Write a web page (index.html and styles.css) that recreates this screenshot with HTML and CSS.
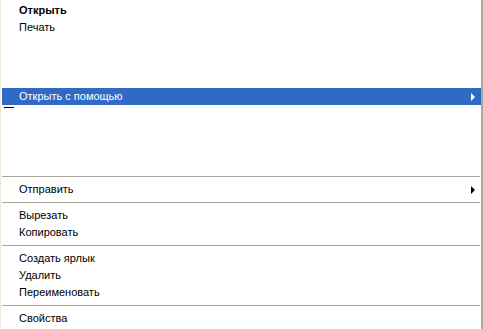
FILE: index.html
```html
<!DOCTYPE html>
<html>
<head>
<meta charset="utf-8">
<link rel="stylesheet" href="styles.css">
</head>
<body>
<div class="menu">
  <div class="item bold">Открыть</div>
  <div class="item">Печать</div>
  <div class="item"></div>
  <div class="item"></div>
  <div class="item"></div>
  <div class="item hl">Открыть с помощью<span class="arrow white"></span></div>
  <div class="sub"><div class="dash"></div></div>
  <div class="sep"></div>
  <div class="item">Отправить<span class="arrow"></span></div>
  <div class="sep"></div>
  <div class="item">Вырезать</div>
  <div class="item">Копировать</div>
  <div class="sep"></div>
  <div class="item">Создать ярлык</div>
  <div class="item">Удалить</div>
  <div class="item">Переименовать</div>
  <div class="sep"></div>
  <div class="item">Свойства</div>
</div>
</body>
</html>
```
FILE: styles.css
```css
html, body {
  margin: 0;
  padding: 0;
  background: #ffffff;
}
.menu {
  width: 483px;
  height: 329px;
  box-sizing: border-box;
  padding: 2px 0 0 0;
  border-left: 1px solid #ece9d8;
  border-right: 2px solid #aca899;
  background: #ffffff;
  font-family: "Liberation Sans", Arial, sans-serif;
  font-size: 11px;
  color: #000000;
  display: flex;
  flex-direction: column;
  overflow: hidden;
}
.item {
  position: relative;
  height: 17px;
  line-height: 17px;
  padding-left: 17px;
  margin-left: 1px;
  flex: none;
  white-space: nowrap;
}
.bold { font-weight: bold; }
.hl {
  background: #316ac5;
  color: #ffffff;
  margin-top: 1px;
}
.arrow {
  position: absolute;
  right: 6px;
  top: 5px;
  width: 0;
  height: 0;
  border-top: 4px solid transparent;
  border-bottom: 4px solid transparent;
  border-left: 4px solid #000000;
}
.arrow.white { border-left-color: #ffffff; }
.sub {
  height: 67px;
  flex: none;
  margin-left: 1px;
}
.dash {
  margin: 2px 0 0 2px;
  width: 10px;
  height: 1px;
  background: #000000;
}
.sep {
  flex: none;
  height: 9px;
  margin-left: 1px;
  display: flex;
  flex-direction: column;
  justify-content: center;
}
.sep::before {
  content: "";
  display: block;
  height: 1px;
  background: #aca899;
  margin-right: 1px;
}
```
